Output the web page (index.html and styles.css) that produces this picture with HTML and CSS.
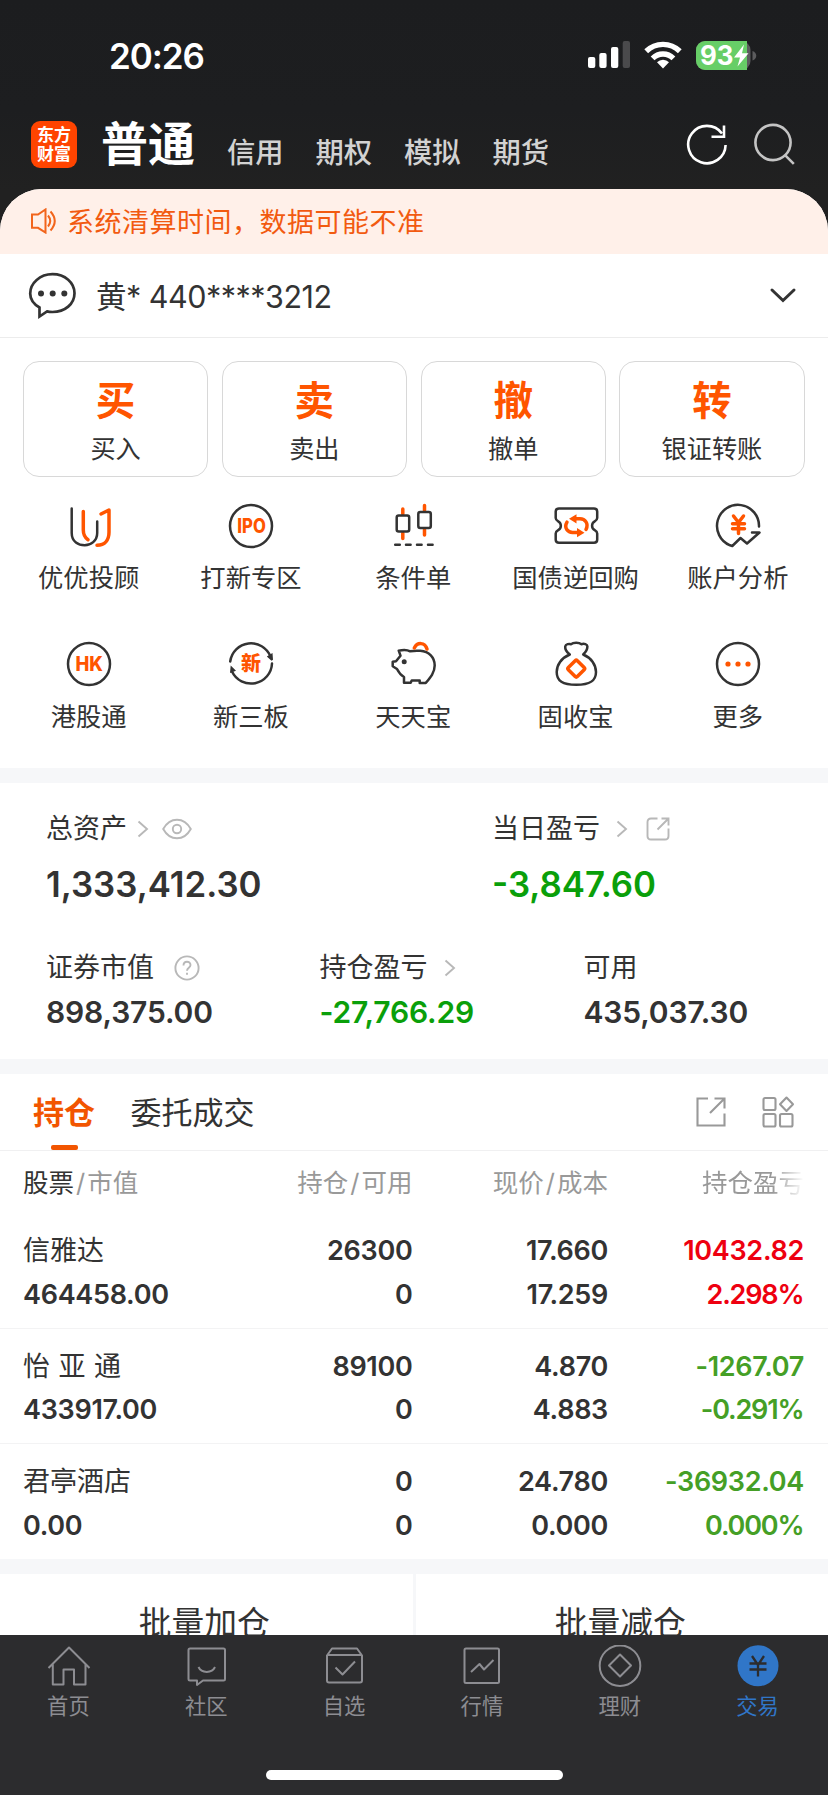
FILE: index.html
```html
<!DOCTYPE html>
<html lang="zh-CN">
<head>
<meta charset="utf-8">
<title>交易</title>
<link rel="stylesheet" href="styles.css">
</head>
<body>
<div class="screen">
  <header class="top">
    <div class="status">
      <span class="clock">20:26</span>
      <div class="status-icons">
        <svg class="signal" width="43" height="28" viewBox="0 0 43 28"><g fill="#fff"><rect x="0" y="16" width="7.3" height="11" rx="2"/><rect x="11.3" y="12" width="7.3" height="15" rx="2"/><rect x="23" y="6" width="7.3" height="21" rx="2"/></g><rect x="34.7" y="0" width="7.3" height="27" rx="2" fill="#4a4a4c"/></svg>
        <svg class="wifi" width="38" height="28" viewBox="0 0 38 28"><g fill="none" stroke="#fff" stroke-width="5.4"><path d="M2.2 10.200a24 24 0 0 1 33.600 0"/><path d="M8.600 17.400a14.600 14.600 0 0 1 20.800 0"/></g><path d="M19 27.500l-6-6.200a8.400 8.400 0 0 1 12 0z" fill="#fff"/></svg>
        <svg class="battery" width="61" height="30" viewBox="0 0 61 30"><rect x="0" y="0" width="54.5" height="29" rx="9" fill="#5c5c5e"/><path d="M9 0h42v29H9a9 9 0 0 1-9-9V9a9 9 0 0 1 9-9z" fill="#67ce67"/><path d="M56.500 10c5 1.500 5 8 0 9.500z" fill="#5c5c5e"/><text x="4" y="24" class="battery-text" textLength="33.5" lengthAdjust="spacingAndGlyphs">93</text><path d="M48 3.500L38 16.500h6l-2.500 9L52.500 12.300h-6.500z" fill="#fff"/></svg>
      </div>
    </div>
    <nav class="accounts">
      <div class="logo"><span>东方</span><span>财富</span></div>
      <span class="acct-main">普通</span>
      <span class="acct">信用</span><span class="acct">期权</span><span class="acct">模拟</span><span class="acct">期货</span>
      <div class="top-actions">
        <svg width="42" height="44" viewBox="0 0 42 44" fill="none" stroke="#fff" stroke-width="2.600"><path d="M39.600 23a18.700 18.700 0 1 1-3.600-11.500"/><path d="M38 3.500v11.300H25.500"/></svg>
        <svg width="42" height="44" viewBox="0 0 42 44" fill="none" stroke="#c4c4c4" stroke-width="2.600"><circle cx="19" cy="20.500" r="17.600"/><path d="M31.300 33.300l8.500 8.500"/></svg>
      </div>
    </nav>
  </header>

  <main class="page">
    <div class="notice">
      <svg width="26" height="26" viewBox="0 0 26 26" fill="none" stroke="#f2651c" stroke-width="2"><path d="M1 6.500h6L14.500 1.500v23L7 19.800H1z"/><path d="M17 7.500q4.500 5.500 0 11M19.500 3.500q8.500 9.500 0 19"/></svg>
      <span>系统清算时间，数据可能不准</span>
    </div>
    <div class="user">
      <svg width="48" height="48" viewBox="0 0 48 48"><path d="M11.500 35.500C5.500 32 2.200 27 2.200 21.500 2.200 11 12 2.200 24.500 2.200s22 8.300 22 19-9.500 18.800-22 18.800c-2 0-4-.2-5.500-.6l-7.500 5.100z" fill="none" stroke="#333" stroke-width="2.700"/><g fill="#333"><circle cx="13" cy="21.500" r="3"/><circle cx="24.700" cy="21.500" r="3"/><circle cx="36.300" cy="21.500" r="3"/></g></svg>
      <span class="user-name">黄* 440****3212</span>
      <svg class="user-more" width="28" height="18" viewBox="0 0 28 18" fill="none" stroke="#333" stroke-width="3" stroke-linecap="round"><path d="M3 3l11 10.500L25 3"/></svg>
    </div>

    <section class="trade">
      <div class="trade-card"><b>买</b><span>买入</span></div>
      <div class="trade-card"><b>卖</b><span>卖出</span></div>
      <div class="trade-card"><b>撤</b><span>撤单</span></div>
      <div class="trade-card"><b>转</b><span>银证转账</span></div>
    </section>

    <section class="tools">
      <div class="tool"><svg class="ic" viewBox="0 0 46 46"><path class="k" d="M5.700 5.500V30c0 9 7 12.300 13 12.300S31.200 38 31.200 30V18.500"/><path class="o" d="M17.300 8.500V27q0 6.500 4.700 9.700M31 42.200c8 0 12-5.500 12-13V7l-8 4"/></svg><span>优优投顾</span></div>
      <div class="tool"><svg class="ic" viewBox="0 0 46 46"><circle class="k" cx="23" cy="23" r="21"/><text x="9.300" y="29.800" class="ic-text" textLength="28.500" lengthAdjust="spacingAndGlyphs">IPO</text></svg><span>打新专区</span></div>
      <div class="tool"><svg class="ic" viewBox="0 0 46 46"><path class="o" d="M12.800 6v5M12.800 30v5.500M34.500 2.500v5M34.500 26.500v5.500"/><rect class="k" x="6.700" y="12.500" width="12.500" height="16" rx="2"/><rect class="k" x="28.300" y="9" width="12.500" height="16" rx="2"/><path class="k" d="M5.200 41.800h4.600M16 41.800h4.600M27 41.800h4.600M38 41.800h4.600"/></svg><span>条件单</span></div>
      <div class="tool"><svg class="ic" viewBox="0 0 46 46"><path class="k" d="M6 5.500H41q3.200 0 3.200 3v6.500q0 2-2.500 3.400a5 5 0 0 0 0 8.800q2.500 1.400 2.500 3.400v6.200q0 3-3.200 3H6q-3.300 0-3.300-3v-6.200q0-2 2.500-3.400a5 5 0 0 0 0-8.800Q2.700 17 2.700 15V8.500q0-3 3.300-3z"/><path class="o" d="M14 19.200c-3.500 6 1 10.300 5.500 10.300H24M33 26.500c3-6-1-10.700-6-10.700h-4"/><path fill="#f50" d="M24 25l7.500 4.700-7.500 4.500zM23.500 11.200L16 15.800l7.500 4.600z"/></svg><span>国债逆回购</span></div>
      <div class="tool"><svg class="ic" viewBox="0 0 46 46"><path class="k" d="M44 23.500A21 21 0 1 0 15 42.300L17.300 43l8.200-8 6.500 5.500L44.500 29.500h-7.500"/><path class="o" d="M18.500 13l5 6.500 5-6.500M17.500 20.800h12M17.500 25.800h12M23.500 20v10.500"/></svg><span>账户分析</span></div>
      <div class="tool"><svg class="ic" viewBox="0 0 46 46"><circle class="k" cx="23" cy="23" r="21"/><text x="9.500" y="29.800" class="ic-text" textLength="27.500" lengthAdjust="spacingAndGlyphs">HK</text></svg><span>港股通</span></div>
      <div class="tool"><svg class="ic" viewBox="0 0 46 46"><path class="k" d="M2.200 20.500A21 21 0 0 1 42.500 15.500M44 22.500A21 21 0 0 1 4 30.500"/><path fill="#333" d="M38.800 15.500l5.700-3.500.5 6.800-1.500 1zM2 32l.7-7.500 5.300 5.300z"/><text x="13" y="30" class="ic-text ic-zh">新</text></svg><span>新三板</span></div>
      <div class="tool"><svg class="ic" viewBox="0 0 46 46"><path class="k" d="M8.700 9.700c4-1 8.500-1 11.500.6 4-.8 7-.8 10-.5 9 .7 14.500 6.500 14.500 14.700 0 7-4.300 12-9 17.500h-6v-2.500h-8l-1 2.200H14V36c-3.500-2-5.500-5-7-8l-4.300-2.700v-4.600l3.300-.4 4.500-5.600z"/><circle cx="14.200" cy="20.700" r="2.500" fill="#333"/><path class="o" d="M24.300 7c3-6 10.500-6 12.700 1"/></svg><span>天天宝</span></div>
      <div class="tool"><svg class="ic" viewBox="0 0 46 46"><path class="k" d="M16.800 13.500C13.500 11 12 8 12.200 5.500c.5-2.500 4-3 6-2.300 2-2 8-2 10 0 3-1 6.200 0 6.200 2.300 0 3-1.500 5.500-4.200 8C38.500 17 43 24 43 31c0 9-6 12.800-19.700 12.800S3.700 40 3.700 31c0-7 4.500-14 13.100-17.500z"/><rect class="o" x="16.900" y="21.300" width="12.700" height="12.700" rx="1.500" transform="rotate(45 23.250 27.650)"/></svg><span>固收宝</span></div>
      <div class="tool"><svg class="ic" viewBox="0 0 46 46"><circle class="k" cx="23" cy="23" r="21"/><g fill="#f50"><circle cx="13" cy="23" r="2.600"/><circle cx="23" cy="23" r="2.600"/><circle cx="33" cy="23" r="2.600"/></g></svg><span>更多</span></div>
    </section>

    <section class="assets">
      <div class="asset-row major">
        <div class="asset"><div class="label">总资产<svg class="arrow" width="12" height="18" viewBox="0 0 12 18"><path d="M1.500 1.500l8.500 7.500-8.500 7.500"/></svg><svg class="eye" width="30" height="22" viewBox="0 0 30 22"><path d="M1.200 11C4.500 5 9 1.700 15 1.700S25.500 5 28.800 11C25.500 17 21 20.300 15 20.300S4.500 17 1.200 11z"/><circle cx="15" cy="11" r="4.200"/></svg></div><div class="value">1,333,412.30</div></div>
        <div class="asset"><div class="label">当日盈亏<svg class="arrow" width="12" height="18" viewBox="0 0 12 18"><path d="M1.500 1.500l8.500 7.500-8.500 7.500"/></svg><svg class="share" width="24" height="24" viewBox="0 0 24 24"><path d="M11.500 1.500H5q-3.500 0-3.500 3.500v14Q1.500 22.500 5 22.500h14q3.500 0 3.500-3.500V11.500M15.500 1.500h7v7M22 2L11.500 12.500"/></svg></div><div class="value down">-3,847.60</div></div>
      </div>
      <div class="asset-row minor">
        <div class="asset"><div class="label">证券市值<svg class="help" width="26" height="26" viewBox="0 0 26 26"><circle cx="13" cy="13" r="11.600"/><path d="M9.500 10.500c0-5 7-4.700 7-.5 0 2.700-3.500 2.800-3.500 5.700"/><path d="M13 17.800v2"/></svg></div><div class="value">898,375.00</div></div>
        <div class="asset"><div class="label">持仓盈亏<svg class="arrow" width="12" height="18" viewBox="0 0 12 18"><path d="M1.500 1.500l8.500 7.500-8.500 7.500"/></svg></div><div class="value down">-27,766.29</div></div>
        <div class="asset"><div class="label">可用</div><div class="value">435,037.30</div></div>
      </div>
    </section>

    <section class="holdings">
      <div class="tabs">
        <span class="tab active">持仓</span><span class="tab">委托成交</span>
        <div class="tab-actions">
          <svg width="30" height="30" viewBox="0 0 30 30"><path d="M12 1.500H1.500v27h27V16.500M18.500 1.500h10v10M28.500 1.500L14 16"/></svg>
          <svg width="33" height="32" viewBox="0 0 33 32"><rect x="1.500" y="2" width="12" height="12" rx="1.500"/><rect x="1.500" y="18" width="12" height="12.500" rx="1.500"/><rect x="18" y="18" width="12.500" height="12.500" rx="1.500"/><path d="M24.500 1.500l6.500 6.700-6.500 6.700L18 8.200z" stroke-linejoin="round"/></svg>
        </div>
      </div>
      <div class="cols head"><span><b>股票</b><i>/</i>市值</span><span>持仓<i>/</i>可用</span><span>现价<i>/</i>成本</span><span class="fade">持仓盈亏</span></div>
      <div class="stock">
        <div class="cols"><span class="name">信雅达</span><span>26300</span><span>17.660</span><span class="red">10432.82</span></div>
        <div class="cols"><span>464458.00</span><span>0</span><span>17.259</span><span class="red pct">2.298%</span></div>
      </div>
      <div class="stock">
        <div class="cols"><span class="name spaced">怡亚通</span><span>89100</span><span>4.870</span><span class="green">-1267.07</span></div>
        <div class="cols"><span>433917.00</span><span>0</span><span>4.883</span><span class="green pct">-0.291%</span></div>
      </div>
      <div class="stock">
        <div class="cols"><span class="name">君亭酒店</span><span>0</span><span>24.780</span><span class="green">-36932.04</span></div>
        <div class="cols"><span>0.00</span><span>0</span><span>0.000</span><span class="green pct">0.000%</span></div>
      </div>
    </section>

    <section class="batch"><span>批量加仓</span><span>批量减仓</span></section>
  </main>

  <footer class="dock">
    <nav class="dock-items">
      <div class="dock-item"><svg viewBox="0 0 44 44"><path d="M1.500 23L22 2.500 42.500 23M5.800 19.500V39.500H16.500V24.500h10.500v15H38.500V19.500"/></svg><span>首页</span></div>
      <div class="dock-item"><svg viewBox="0 0 44 44"><path d="M5 3.500H38.500q1.500 0 1.500 1.500V34q0 1.500-1.500 1.500H18l-6 4.500v-4.500H5q-1.500 0-1.500-1.500V5q0-1.500 1.500-1.500zM13.500 22c3 6.500 13.500 6.500 16.500 0"/></svg><span>社区</span></div>
      <div class="dock-item"><svg viewBox="0 0 44 44"><path d="M4 10.500L9 3.500H34l5 7V35.500q0 2-2 2H6q-2 0-2-2zM4 10H39M12.500 22.500l7 7L32 16.500"/></svg><span>自选</span></div>
      <div class="dock-item"><svg viewBox="0 0 44 44"><rect x="4.500" y="3.500" width="34.500" height="34.500" rx="1.500"/><path d="M11 27l8.500-8 4.500 5.500 9.500-9.500"/></svg><span>行情</span></div>
      <div class="dock-item"><svg viewBox="0 0 44 44"><circle cx="22" cy="20.700" r="20.300"/><path d="M22 9.500l11 11-11 11-11-11z"/></svg><span>理财</span></div>
      <div class="dock-item on"><svg viewBox="0 0 44 44"><circle cx="22" cy="20.700" r="20.500" fill="#3076c8" stroke="none"/><path d="M16 11l6 9 6-9M13.500 18.500h17M13.500 24.500h17M22 19v12.500" stroke="#2c2c2e" stroke-width="2.300"/></svg><span>交易</span></div>
    </nav>
    <div class="home-bar"></div>
  </footer>
</div>
</body>
</html>
```

FILE: styles.css
```css
* { box-sizing: border-box; }
body { margin: 0; background: #fff; font-family: Inter, "Noto Sans CJK SC", sans-serif; color: #333; }
i, b { font-style: normal; font-weight: inherit; }
svg { display: block; flex: none; }
.screen { width: 828px; height: 1795px; display: flex; flex-direction: column; overflow: hidden; background: linear-gradient(#1c1d1f 0, #1d1e20 110px, #212121 190px, #212121 240px, #fff 240px); }

.top { height: 189px; flex: none; color: #fff; }
.status { height: 112px; display: flex; justify-content: space-between; padding: 0 71px 0 109px; align-items: center; }
.clock { font-size: 35px; font-weight: 600; letter-spacing: -1.1px; }
.status-icons { display: flex; }
.signal { margin-right: 13px; }
.wifi { margin-right: 14px; }
.battery-text { font: 700 26.500px Inter, sans-serif; fill: #fff; }
.accounts { height: 77px; display: flex; padding: 0 32px 0 31px; }
.logo { width: 46px; height: 47px; margin: 9px 25px 0 0; border-radius: 9px; background: #ff4400; display: flex; flex-direction: column; justify-content: center; align-items: center; font-size: 17px; line-height: 19px; font-weight: 700; }
.acct-main { font-size: 47px; font-weight: 700; line-height: 64px; width: 125px; margin-left: -1px; margin-right: 1px; }
.acct { font-size: 28.300px; font-weight: 500; line-height: 40px; width: 88.500px; padding-top: 21px; color: #d2d2d2; }
.top-actions { display: flex; gap: 26px; margin: 10px 0 0 auto; }

.page { flex: none; height: 1446px; overflow: hidden; border-radius: 42px 42px 0 0; background: #fff; }
.notice { height: 65px; padding: 0 0 2px 31px; background: #fff0e9; color: #f25a10; display: flex; align-items: center; gap: 10px; font-size: 27px; letter-spacing: .5px; }
.user { height: 84px; display: flex; align-items: center; padding: 0 31px 0 28px; border-bottom: 1.500px solid #ececec; }
.user-name { margin-left: 20px; font-size: 30.500px; letter-spacing: -.5px; margin-top: -2px; }
.user-more { margin-left: auto; }

.trade { display: grid; grid-template-columns: repeat(4, 1fr); gap: 13.600px; padding: 23px 23.500px 0 23px; }
.trade-card { height: 116px; border: 1.500px solid #d8d8d8; border-radius: 16px; display: flex; flex-direction: column; align-items: center; }
.trade-card b { font-size: 39.500px; font-weight: 700; color: #f50; line-height: 48px; margin-top: 15px; }
.trade-card span { font-size: 25.200px; line-height: 36px; margin-top: 6px; }

.tools { display: grid; grid-template-columns: repeat(5, 162.300px); justify-content: center; grid-auto-rows: 138.500px; height: 291px; padding: 25.500px 1.500px 0 0; }
.tool { display: flex; flex-direction: column; align-items: center; }
.tool span { font-size: 25.300px; line-height: 36px; margin-top: 11.500px; }
.ic { width: 46px; height: 46px; }
.k { fill: none; stroke: #333; stroke-width: 2.500; stroke-linecap: round; stroke-linejoin: round; }
.o { fill: none; stroke: #f50; stroke-width: 3.500; stroke-linecap: round; stroke-linejoin: round; }
.ic-text { font: 800 19.500px Inter, "Noto Sans CJK SC", sans-serif; fill: #f50; }
.ic-zh { font-size: 20px; }

.assets { border-top: 15px solid #f6f7f9; border-bottom: 15px solid #f6f7f9; height: 306px; padding: 26px 0 0 46px; }
.asset-row { display: grid; }
.major { grid-template-columns: 446px 1fr; height: 139px; }
.minor { grid-template-columns: 273.500px 264px 1fr; }
.label { font-size: 27px; line-height: 40px; height: 40px; display: flex; align-items: center; }
.label svg { fill: none; stroke: #b8b8b8; stroke-width: 1.900; }
.arrow { margin-left: 10px; }
.eye { margin-left: 13px; }
.share { margin-left: 18px; }
.help { margin-left: 20px; }
.asset:nth-child(2) .arrow { margin-left: 16px; }
.value { font-weight: 600; }
.major .value { font-size: 34.800px; line-height: 50px; margin-top: 10px; }
.minor .value { font-size: 30px; line-height: 44px; margin-top: 2px; letter-spacing: -.15px; }
.down { color: #0a9f0a; }

.tabs { height: 77px; display: flex; align-items: stretch; padding: 0 33px 0 33px; border-bottom: 1.500px solid #f0f0f1; font-size: 31px; line-height: 78px; }
.tab { margin-right: 35.500px; }
.active { color: #f25500; font-weight: 700; display: flex; flex-direction: column; height: 76px; align-items: center; }
.active::after { content: ""; width: 27px; height: 5px; margin-top: -7px; border-radius: 2px; background: #f25500; flex: none; }
.tab-actions { margin-left: auto; display: flex; gap: 36px; align-items: center; }
.tab-actions svg { fill: none; stroke: #999; stroke-width: 2.100; }
.cols { display: grid; grid-template-columns: 213.500px 176px 195.500px 196px; padding-left: 23px; text-align: right; }
.cols > :first-child { text-align: left; }
.head { height: 62px; line-height: 63px; font-size: 25.500px; color: #999; }
.head b { color: #333; }
.head i { margin: 0 2px; }
.fade { -webkit-mask-image: linear-gradient(90deg, #000 84%, transparent 100%); mask-image: linear-gradient(90deg, #000 84%, transparent 100%); }
.stock { height: 115.500px; border-bottom: 1.500px solid #f3f3f4; padding-top: 16px; font-size: 27px; font-weight: 600; line-height: 43.500px; letter-spacing: -.3px; }
.stock:last-child { border: 0; height: 114.500px; }
.name { font-weight: 400; letter-spacing: 0; }
.spaced { letter-spacing: 8.500px; }
.pct { letter-spacing: -1.200px; padding-right: .7px; }
.red { color: #ee0010; }
.green { color: #459f26; }

.batch { height: 110px; border-top: 15.500px solid #f6f7f9; display: grid; grid-template-columns: 415.500px 412.500px; text-align: center; font-size: 32.800px; line-height: 98px; }
.batch span:first-child { border-right: 3.500px solid #f6f7f9; padding-right: 4px; }
.batch span:last-child { padding-right: 3px; }

.dock { height: 160px; flex: none; background: #2c2c2e; display: flex; flex-direction: column; align-items: center; }
.dock-items { width: 828px; height: 134.500px; display: grid; grid-template-columns: repeat(6, 1fr); padding: 10px 1px 0 0; color: #8d8d92; }
.dock-item { display: flex; flex-direction: column; align-items: center; font-size: 21.300px; line-height: 30px; gap: 2px; }
.dock-item svg { width: 44px; height: 44px; fill: none; stroke: #8d8d92; stroke-width: 2; stroke-linejoin: round; }
.dock-item span { margin-right: 1px; }
.on { color: #3076c8; }
.home-bar { width: 297px; height: 10.500px; border-radius: 6px; background: #fff; }
```
